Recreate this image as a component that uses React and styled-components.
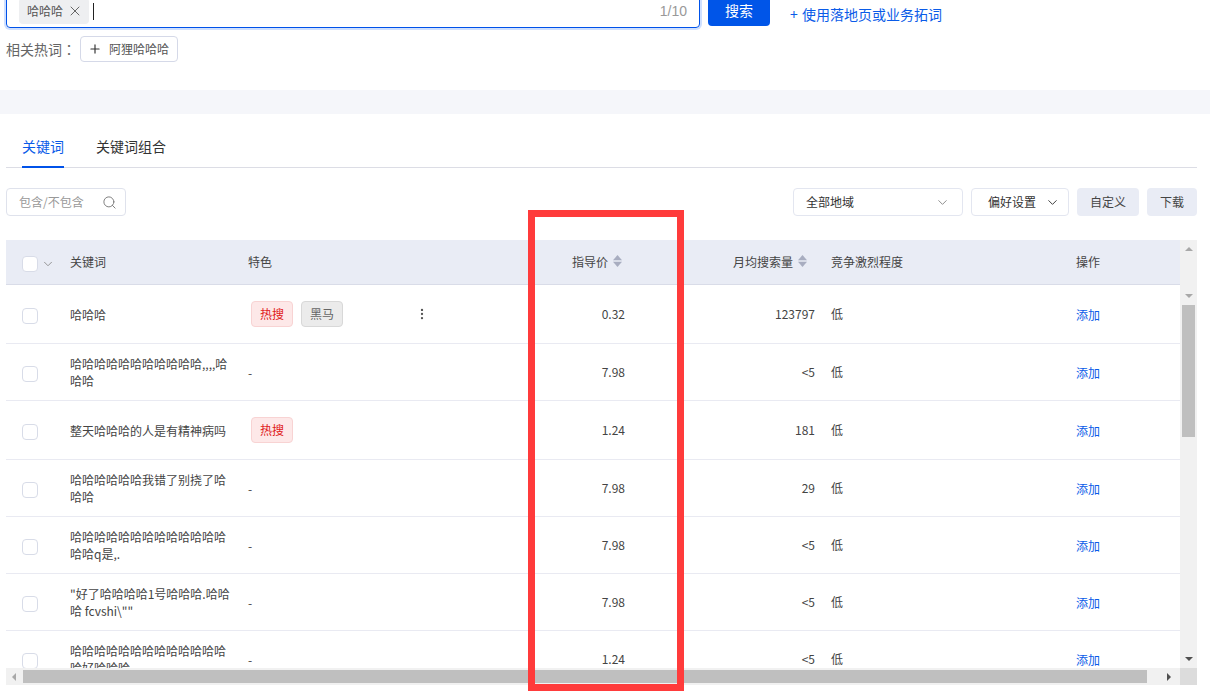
import React from "react";
import styled, { createGlobalStyle } from "styled-components";
import { ChevronDown, EllipsisVertical, Plus, Search, X } from "lucide-react";

const GlobalStyle = createGlobalStyle`
  html, body {
    margin: 0;
    padding: 0;
    background: #fff;
    overflow: hidden;
  }
  * {
    box-sizing: border-box;
  }
  body {
    font-family: "Noto Sans CJK SC", "Liberation Sans", sans-serif;
    font-size: 12px;
    color: #333;
  }
`;

const Page = styled.div`
  position: relative;
  width: 1210px;
  height: 696px;
  overflow: hidden;
`;

const TopSection = styled.section`
  padding: 0 0 0 6px;
  height: 96px;
`;

const SearchRow = styled.div`
  display: flex;
  align-items: flex-start;
  margin-top: -6px;
`;

const SearchBox = styled.div`
  display: flex;
  align-items: center;
  width: 694px;
  height: 34px;
  padding: 0 12px 0 12px;
  border: 1px solid #0052e9;
  border-radius: 4px;
  box-shadow: 0 0 0 2px #cfe0ff;
`;

const KeywordTag = styled.span`
  display: flex;
  align-items: center;
  justify-content: space-between;
  width: 70px;
  height: 26px;
  padding: 0 6px 0 8px;
  background: #eeeff1;
  border-radius: 4px;
  line-height: 18px;
  color: #555;
  svg {
    color: #666;
  }
`;

const Caret = styled.i`
  width: 1px;
  height: 17px;
  margin-left: 4px;
  background: #222;
`;

const Counter = styled.span`
  margin-left: auto;
  font-family: "Liberation Sans", sans-serif;
  font-size: 14px;
  color: #999;
`;

const SearchButton = styled.button`
  width: 62px;
  height: 32px;
  margin-left: 8px;
  padding: 0;
  border: 0;
  border-radius: 4px;
  background: #0055e8;
  color: #fff;
  font: inherit;
  font-size: 14px;
  line-height: 20px;
`;

const LandingLink = styled.a`
  margin: 10px 0 0 20px;
  font-size: 14px;
  line-height: 20px;
  word-spacing: 1px;
  color: #0a5be8;
`;

const HotRow = styled.div`
  display: flex;
  align-items: center;
  margin-top: 8px;
  font-size: 14px;
  line-height: 20px;
  color: #666;
`;

const Colon = styled.span`
  font-family: "Noto Sans CJK TC", sans-serif;
`;

const HotButton = styled.button`
  display: flex;
  align-items: center;
  gap: 7px;
  height: 26px;
  width: 98px;
  margin-left: 4px;
  padding: 0 0 0 7px;
  background: #fff;
  border: 1px solid #d5d9e8;
  border-radius: 4px;
  font: inherit;
  font-size: 12px;
  color: #555;
  svg {
    color: #333;
  }
`;

const Band = styled.div`
  height: 24px;
  background: #f5f6fa;
`;

const Content = styled.section`
  width: 1197px;
  padding-left: 6px;
`;

const TabBar = styled.div`
  display: flex;
  align-items: flex-end;
  gap: 32px;
  height: 54px;
  padding-left: 16px;
  border-bottom: 1px solid #dcdde5;
`;

const Tab = styled.div`
  margin-bottom: -1px;
  padding-bottom: 10px;
  font-size: 14px;
  line-height: 20px;
  color: ${(p) => (p.$active ? "#0a5be8" : "#333")};
  border-bottom: 2px solid ${(p) => (p.$active ? "#0052e9" : "transparent")};
`;

const Toolbar = styled.div`
  display: flex;
  align-items: center;
  height: 28px;
  margin-top: 20px;
  gap: 8px;
`;

const Filter = styled.div`
  display: flex;
  align-items: center;
  justify-content: space-between;
  width: 120px;
  height: 28px;
  margin-right: auto;
  padding: 0 8px 2px 12px;
  border: 1px solid #dfe2ec;
  border-radius: 4px;
  color: #999;
  svg {
    color: #777;
    margin-top: 2px;
  }
`;

const SelectBox = styled.div`
  display: flex;
  align-items: center;
  justify-content: space-between;
  width: ${(p) => p.$width}px;
  height: 28px;
  padding: ${(p) => p.$padding};
  border: 1px solid #e3e6f0;
  border-radius: 4px;
  svg {
    color: ${(p) => p.$iconColor};
    margin-top: 2px;
  }
`;

const GrayButton = styled.button`
  width: ${(p) => p.$width}px;
  height: 28px;
  padding: 0 0 2px;
  border: 0;
  border-radius: 4px;
  background: #e9ecf5;
  font: inherit;
  color: #444;
`;

const TableArea = styled.div`
  display: grid;
  grid-template-columns: 1174px 17px;
  grid-template-rows: 428px 17px;
  margin-top: 24px;
`;

const TableClip = styled.div`
  overflow: hidden;
`;

const Table = styled.table`
  width: 1174px;
  table-layout: fixed;
  border-collapse: separate;
  border-spacing: 0;
  line-height: 17px;
`;

const Th = styled.th`
  height: 45px;
  padding: ${(p) => p.$padding || "0 0 2px"};
  background: #e9ecf5;
  border-bottom: 1px solid #d9dce8;
  font-weight: 400;
  color: #444;
  text-align: ${(p) => p.$align || "left"};
`;

const Td = styled.td`
  padding: ${(p) => p.$padding || "0 0 2px"};
  border-bottom: 1px solid #e9eaf2;
  text-align: ${(p) => p.$align || "left"};
  color: #444;
`;

const CheckHead = styled(Th)`
  padding: 4px 0 0;
`;

const CheckCell = styled(Td)`
  padding: 4px 0 0;
`;

const KeywordCell = styled(Td)`
  padding: 11px 16px 11px 0;
  word-break: break-all;
`;

const FeatureCell = styled(Td)`
  padding: 0;
`;

const FeatureWrap = styled.div`
  display: flex;
  align-items: center;
  gap: 8px;
  padding: 16px 0 16px 3px;
  svg {
    margin-left: 64px;
    color: #555;
  }
`;

const Badge = styled.span`
  width: 42px;
  height: 26px;
  border-radius: 4px;
  border: 1px solid ${(p) => (p.$kind === "hot" ? "#f8d3d3" : "#d8d8d8")};
  background: ${(p) => (p.$kind === "hot" ? "#fde8e8" : "#ebebeb")};
  color: ${(p) => (p.$kind === "hot" ? "#e02020" : "#666")};
  text-align: center;
  line-height: 24px;
`;

const CheckRow = styled.div`
  display: flex;
  align-items: center;
  gap: 3px;
  padding-left: 16px;
  svg {
    color: #888;
  }
`;

const Check = styled.span`
  display: block;
  width: 16px;
  height: 16px;
  background: #fff;
  border: 1px solid #d8dce8;
  border-radius: 4px;
`;

const AddLink = styled.a`
  position: relative;
  top: 1px;
  color: #0a5be8;
`;

const SortHead = styled.span`
  display: inline-flex;
  align-items: center;
  gap: 5px;
`;

const VBar = styled.div`
  display: flex;
  flex-direction: column;
  align-items: center;
  background: #f1f1f1;
  padding-top: 7px;
`;

const VThumb = styled.div`
  width: 13px;
  height: 132px;
  margin-top: 7px;
  background: #bfbfbf;
`;

const HBar = styled.div`
  display: flex;
  align-items: center;
  padding: 0 5px 0 6px;
  background: #f1f1f1;
`;

const HThumb = styled.div`
  width: 1124px;
  height: 13px;
  margin: 0 20px 0 7px;
  background: #bfbfbf;
`;

const Corner = styled.div`
  background: #dcdcdc;
`;

const Arrow = styled.i`
  display: block;
  flex: none;
  width: 0;
  height: 0;
  ${(p) => {
    const c = p.$dark ? "#505050" : "#a8a8a8";
    if (p.$dir === "up") return `border: 4px solid transparent; border-top: 0; border-bottom: 4px solid ${c}; margin-top: ${p.$gap || 0}px;`;
    if (p.$dir === "down") return `border: 4px solid transparent; border-bottom: 0; border-top: 4px solid ${c}; margin-top: ${p.$gap || 0}px;`;
    if (p.$dir === "left") return `border: 4px solid transparent; border-left: 0; border-right: 4px solid ${c};`;
    return `border: 4px solid transparent; border-right: 0; border-left: 4px solid ${c};`;
  }}
`;

const Highlight = styled.div`
  position: absolute;
  left: 528px;
  top: 210px;
  width: 156px;
  height: 481px;
  border: 7px solid #ff3b3b;
  pointer-events: none;
`;

const SortIcon = () => (
  <svg width="9" height="12" viewBox="0 0 9 12">
    <polygon points="4.5,0 9,5.2 0,5.2" fill="#a8adc0" />
    <polygon points="4.5,12 9,6.8 0,6.8" fill="#a8adc0" />
  </svg>
);

const rows = [
  { keyword: "哈哈哈", badges: ["hot", "dark"], price: "0.32", volume: "123797" },
  { keyword: "哈哈哈哈哈哈哈哈哈哈哈,,,,哈哈哈", price: "7.98", volume: "<5" },
  { keyword: "整天哈哈哈的人是有精神病吗", badges: ["hot"], price: "1.24", volume: "181" },
  { keyword: "哈哈哈哈哈哈我错了别挠了哈哈哈", price: "7.98", volume: "29" },
  { keyword: "哈哈哈哈哈哈哈哈哈哈哈哈哈哈哈q是,.", price: "7.98", volume: "<5" },
  { keyword: "\"好了哈哈哈哈1号哈哈哈.哈哈哈 fcvshi\\\"\"", price: "7.98", volume: "<5" },
  { keyword: "哈哈哈哈哈哈哈哈哈哈哈哈哈哈好哈哈哈", price: "1.24", volume: "<5" },
];

const badgeText = { hot: "热搜", dark: "黑马" };

export default function App() {
  return (
    <Page>
      <GlobalStyle />
      <TopSection>
        <SearchRow>
          <SearchBox>
            <KeywordTag>
              哈哈哈
              <X size={16} strokeWidth={1.5} />
            </KeywordTag>
            <Caret />
            <Counter>1/10</Counter>
          </SearchBox>
          <SearchButton>搜索</SearchButton>
          <LandingLink>+ 使用落地页或业务拓词</LandingLink>
        </SearchRow>
        <HotRow>
          相关热词<Colon>：</Colon>
          <HotButton>
            <Plus size={14} strokeWidth={2} />
            阿狸哈哈哈
          </HotButton>
        </HotRow>
      </TopSection>
      <Band />
      <Content>
        <TabBar>
          <Tab $active>关键词</Tab>
          <Tab>关键词组合</Tab>
        </TabBar>
        <Toolbar>
          <Filter>
            包含/不包含
            <Search size={15} strokeWidth={1.5} />
          </Filter>
          <SelectBox $width={170} $padding="0 12px 2px 12px" $iconColor="#888">
            全部地域
            <ChevronDown size={15} strokeWidth={1.5} />
          </SelectBox>
          <SelectBox $width={98} $padding="0 8px 2px 16px" $iconColor="#333">
            偏好设置
            <ChevronDown size={15} strokeWidth={1.5} />
          </SelectBox>
          <GrayButton $width={62}>自定义</GrayButton>
          <GrayButton $width={50}>下载</GrayButton>
        </Toolbar>
        <TableArea>
          <TableClip>
            <Table>
              <colgroup>
                <col width="64" />
                <col width="178" />
                <col width="230" />
                <col width="147" />
                <col width="190" />
                <col width="261" />
                <col width="104" />
              </colgroup>
              <thead>
                <tr>
                  <CheckHead>
                    <CheckRow>
                      <Check />
                      <ChevronDown size={14} strokeWidth={1.5} />
                    </CheckRow>
                  </CheckHead>
                  <Th>关键词</Th>
                  <Th>特色</Th>
                  <Th $align="right" $padding="0 3px 2px 0">
                    <SortHead>
                      指导价
                      <SortIcon />
                    </SortHead>
                  </Th>
                  <Th $align="right" $padding="0 8px 2px 0">
                    <SortHead>
                      月均搜索量
                      <SortIcon />
                    </SortHead>
                  </Th>
                  <Th $padding="0 0 2px 16px">竞争激烈程度</Th>
                  <Th>操作</Th>
                </tr>
              </thead>
              <tbody>
                {rows.map((row) => (
                  <tr key={row.keyword}>
                    <CheckCell>
                      <CheckRow>
                        <Check />
                      </CheckRow>
                    </CheckCell>
                    <KeywordCell>{row.keyword}</KeywordCell>
                    <FeatureCell>
                      {row.badges ? (
                        <FeatureWrap>
                          {row.badges.map((b) => (
                            <Badge key={b} $kind={b}>
                              {badgeText[b]}
                            </Badge>
                          ))}
                          {row.badges.length > 1 && <EllipsisVertical size={14} />}
                        </FeatureWrap>
                      ) : (
                        "-"
                      )}
                    </FeatureCell>
                    <Td $align="right">{row.price}</Td>
                    <Td $align="right">{row.volume}</Td>
                    <Td $padding="0 0 2px 16px">低</Td>
                    <Td>
                      <AddLink>添加</AddLink>
                    </Td>
                  </tr>
                ))}
              </tbody>
            </Table>
          </TableClip>
          <VBar>
            <Arrow $dir="up" />
            <Arrow $dir="down" $gap={43} />
            <VThumb />
            <Arrow $dir="down" $dark $gap={220} />
          </VBar>
          <HBar>
            <Arrow $dir="left" />
            <HThumb />
            <Arrow $dir="right" $dark />
          </HBar>
          <Corner />
        </TableArea>
      </Content>
      <Highlight />
    </Page>
  );
}
